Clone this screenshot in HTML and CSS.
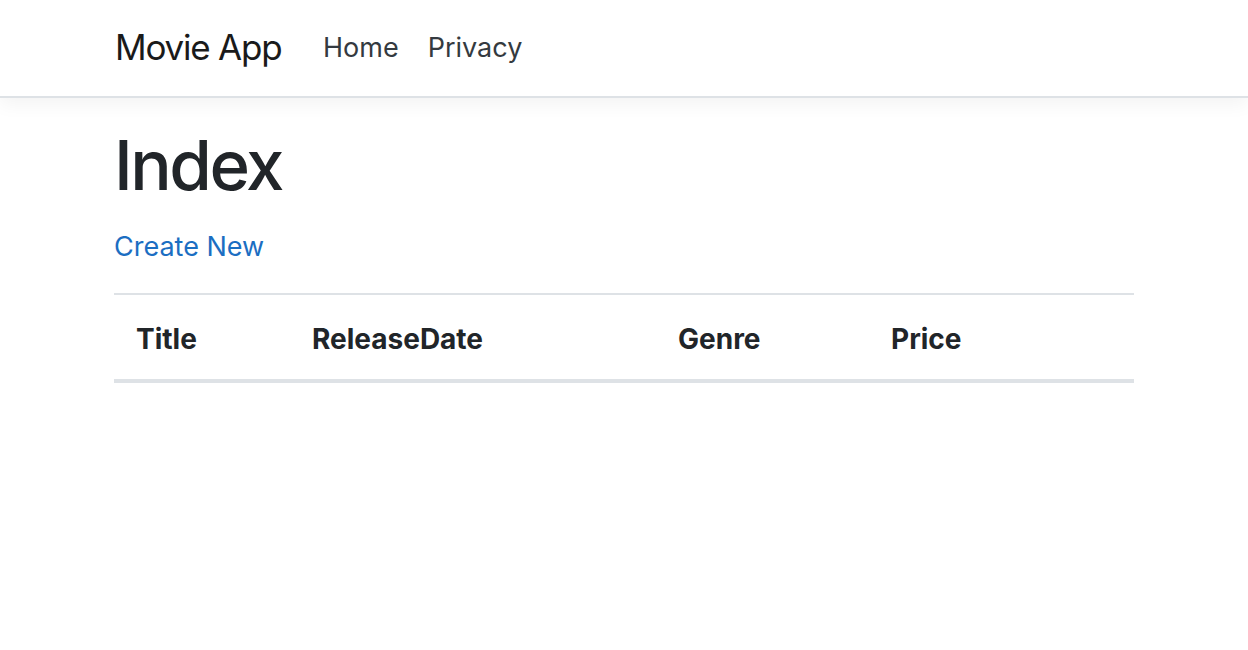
FILE: index.html
```html
<!DOCTYPE html>
<html lang="en">
<head>
<meta charset="utf-8">
<title>Index - Movie App</title>
<link rel="stylesheet" href="styles.css">
</head>
<body>
<header class="navbar">
  <div class="container nav-inner">
    <a class="brand" href="#">Movie App</a>
    <nav class="nav-links">
      <a class="nav-link" href="#">Home</a>
      <a class="nav-link" href="#">Privacy</a>
    </nav>
  </div>
</header>
<main class="container">
  <h1 class="page-title">Index</h1>
  <p class="create"><a href="#">Create New</a></p>
  <table class="table">
    <thead>
      <tr>
        <th class="c-title">Title</th>
        <th class="c-date">ReleaseDate</th>
        <th class="c-genre">Genre</th>
        <th class="c-price">Price</th>
      </tr>
    </thead>
    <tbody></tbody>
  </table>
</main>
</body>
</html>
```

FILE: styles.css
```css
* { box-sizing: border-box; }
html, body { margin: 0; padding: 0; }
body {
  font-family: Inter, "Noto Sans", "Liberation Sans", sans-serif;
  color: #212529;
  background: #fff;
}
.container {
  max-width: 1020px;
  margin: 0 auto;
}
.navbar {
  height: 98px;
  border-bottom: 2px solid #dee2e6;
  box-shadow: 0 6px 18px rgba(0, 0, 0, 0.05);
  background: #fff;
}
.nav-inner {
  display: flex;
  align-items: center;
  height: 96px;
  padding-bottom: 2px;
}
.brand {
  font-size: 35px;
  color: #1a1a1a;
  text-decoration: none;
  margin-right: 27px;
  margin-left: 1px;
  letter-spacing: -1.2px;
}
.nav-links { display: flex; }
.nav-link {
  font-size: 27px;
  color: #343a40;
  text-decoration: none;
  padding: 0 14.5px;
}
.page-title {
  font-size: 69px;
  font-weight: 500;
  margin: 26px 0 0;
  line-height: 83px;
  letter-spacing: -2.5px;
}
.create {
  margin: 20px 0 0;
  font-size: 27px;
  line-height: 40px;
}
.create a { color: #1b6ec2; text-decoration: none; }
.table {
  width: 100%;
  border-collapse: collapse;
  margin-top: 26px;
}
.table th {
  text-align: left;
  font-size: 28px;
  font-weight: 700;
  line-height: 40px;
  padding: 24px 22px 20px;
  border-top: 2px solid #dee2e6;
  border-bottom: 4px solid #dee2e6;
  color: #212529;
}
.c-title { width: 176px; }
.c-date { width: 366px; }
.c-genre { width: 213px; }
.c-price { width: 265px; }
```
